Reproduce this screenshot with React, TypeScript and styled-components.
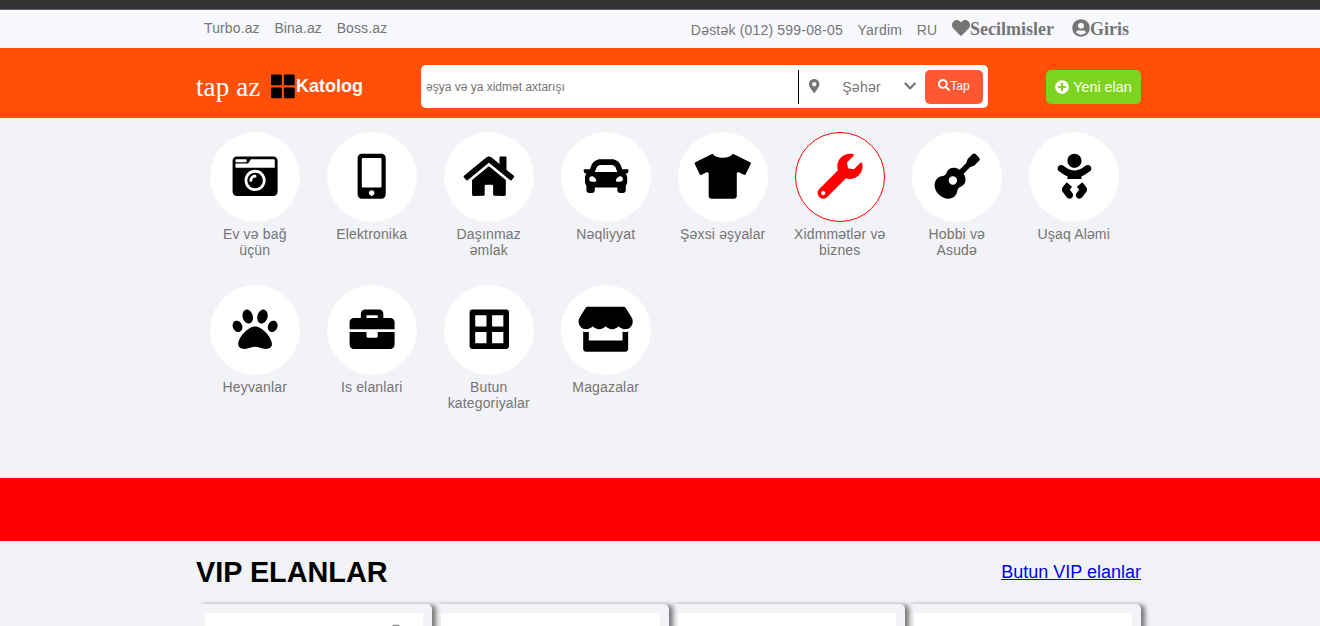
import React from 'react';
import styled, { createGlobalStyle } from 'styled-components';
import {
  FaCameraRetro, FaMobileAlt, FaHome, FaCar, FaTshirt, FaWrench, FaGuitar, FaBaby, FaPaw,
  FaBriefcase, FaBorderAll, FaStore, FaHeart, FaUserCircle, FaMapMarkerAlt, FaChevronDown,
  FaSearch, FaPlusCircle,
} from 'react-icons/fa';
import type { IconType } from 'react-icons';

const GlobalStyle = createGlobalStyle`
  * { box-sizing: border-box; }
  body {
    margin: 0;
    background: #f1f3f7;
    font-family: "Liberation Sans", Arial, sans-serif;
    overflow: hidden;
  }
  svg { display: block; flex: none; }
`;

const Page = styled.div`
  height: 626px;
  overflow: hidden;
`;

const Strip = styled.div`
  height: 10px;
  background: #333;
  border-bottom: 1px solid #666;
`;

const TopBar = styled.div`
  height: 38px;
  background: #f8f9fd;
  color: #757575;
  display: flex;
  justify-content: space-between;
  padding: 0 191px 0 204px;
`;

const TopLinks = styled.nav`
  display: flex;
  gap: 14.7px;
  font-size: 14px;
  line-height: 16px;
  padding-top: 10px;
  letter-spacing: 0.12px;
`;

const SupportLinks = styled.nav`
  display: flex;
  gap: 14.7px;
  font-size: 14px;
  line-height: 16px;
  padding-top: 12px;
  white-space: nowrap;
  letter-spacing: 0.19px;
`;

const IconLink = styled.a<{ $before?: number }>`
  display: flex;
  font: bold 18px/20px "Liberation Serif", "Times New Roman", serif;
  letter-spacing: 0;
  height: 20px;
  margin-top: -3px;
  margin-left: ${(p) => p.$before ?? 0}px;
`;

const Header = styled.header`
  height: 70px;
  background: #ff4f08;
  color: #fff;
  display: flex;
  align-items: center;
  padding: 0 179px 0 196px;
`;

const Logo = styled.a`
  font: 27px/30px "Liberation Serif", "Times New Roman", serif;
  letter-spacing: 0.1px;
  width: 74.5px;
  padding-top: 7px;
`;

const Catalog = styled.a`
  display: flex;
  align-items: center;
  width: 150.5px;
  font-weight: bold;
  font-size: 18px;
  line-height: 20px;
  padding-top: 6px;

  span { padding: 0 0 1px 0.5px; }
`;

const SearchBox = styled.form`
  width: 567px;
  height: 43px;
  margin-top: 7px;
  background: #fff;
  border-radius: 5px;
  display: flex;
  align-items: center;
  color: #757575;
  padding: 0 5px;
`;

const Query = styled.span`
  width: 372px;
  font-size: 12px;
  line-height: 14px;
`;

const City = styled.div`
  width: 127px;
  height: 34px;
  border-left: 1px solid #000;
  display: flex;
  align-items: center;
  padding: 0 9px 0 10px;
  font-size: 14px;

  span { margin: 0 auto; letter-spacing: 0.3px; }
  svg { height: 14px; margin-top: -2px; overflow: visible; }
  svg:first-child { width: 10.5px; }
  svg:last-child { width: 12.25px; }
`;

const SearchButton = styled.button`
  width: 58px;
  height: 34px;
  border: 0;
  border-radius: 5px;
  background: #ff5833;
  color: #fff;
  font: 12px "Liberation Sans", Arial, sans-serif;
  display: flex;
  justify-content: center;
  padding: 9px 0 0;
`;

const NewAd = styled.a`
  margin-left: auto;
  margin-top: 7px;
  width: 95px;
  height: 34px;
  border-radius: 5px;
  background: #7ed321;
  display: flex;
  align-items: center;
  justify-content: center;
  gap: 4px;
  font-size: 14.3px;
  white-space: nowrap;
`;

const Categories = styled.section`
  height: 360px;
  padding: 14px 179px 0 196px;
  display: grid;
  grid-template-columns: repeat(8, 117px);
  grid-auto-rows: 153px;
`;

const Category = styled.a`
  display: flex;
  flex-direction: column;
  align-items: center;
  color: #757575;
  font-size: 14px;
  line-height: 16px;
  text-align: center;
  letter-spacing: 0.16px;

  span { width: 97px; margin-top: 4px; padding-left: 0.5px; }
`;

const Circle = styled.div<{ $active?: boolean; $iconWidth: number }>`
  width: 90px;
  height: 90px;
  border-radius: 50%;
  background: #fff;
  color: ${(p) => (p.$active ? 'red' : '#000')};
  border: 1px solid ${(p) => (p.$active ? 'red' : '#fff')};
  display: flex;
  align-items: center;
  justify-content: center;
  padding-bottom: 2px;

  svg {
    width: ${(p) => p.$iconWidth}px;
    height: 45px;
    overflow: visible;
    transform: translate(0.6px, -0.3px);
  }
`;

const Banner = styled.div`
  height: 63px;
  background: red;
`;

const VipHead = styled.div`
  display: flex;
  justify-content: space-between;
  align-items: center;
  height: 62px;
  padding: 0 179px 0 196px;

  h2 { margin: 0; font-size: 28.8px; line-height: 34px; }
  a { font-size: 18px; color: #0000ee; text-decoration: underline; }
`;

const Cards = styled.div`
  display: grid;
  grid-template-columns: repeat(4, 236.25px);
  padding: 1px 179px 0 196px;
`;

const Card = styled.article`
  height: 280px;
  border-radius: 5px;
  box-shadow: 5px 0 5px -1px #777;
  padding: 9px 9px 0;
`;

const Photo = styled.div`
  height: 160px;
  background: #fff;
  padding: 11px 0 0 183px;
`;

const items: { icon: IconType; width: number; label: string; active?: boolean }[] = [
  { icon: FaCameraRetro, width: 45, label: 'Ev və bağ üçün' },
  { icon: FaMobileAlt, width: 28.125, label: 'Elektronika' },
  { icon: FaHome, width: 50.625, label: 'Daşınmaz əmlak' },
  { icon: FaCar, width: 45, label: 'Nəqliyyat' },
  { icon: FaTshirt, width: 56.25, label: 'Şəxsi əşyalar' },
  { icon: FaWrench, width: 45, label: 'Xidmmətlər və biznes', active: true },
  { icon: FaGuitar, width: 45, label: 'Hobbi və Asudə' },
  { icon: FaBaby, width: 33.75, label: 'Uşaq Aləmi' },
  { icon: FaPaw, width: 45, label: 'Heyvanlar' },
  { icon: FaBriefcase, width: 45, label: 'Is elanlari' },
  { icon: FaBorderAll, width: 39.375, label: 'Butun kategoriyalar' },
  { icon: FaStore, width: 54.14, label: 'Magazalar' },
];

const GridIcon = () => (
  <svg width="25" height="25" viewBox="0 0 25 25">
    <rect x="0" y="0.5" width="10.8" height="10.8" rx="1.3" />
    <rect x="12.9" y="0.5" width="10.8" height="10.8" rx="1.3" />
    <rect x="0" y="13.4" width="10.8" height="10.8" rx="1.3" />
    <rect x="12.9" y="13.4" width="10.8" height="10.8" rx="1.3" />
  </svg>
);

export default function App() {
  return (
    <Page>
      <GlobalStyle />
      <Strip />
      <TopBar>
        <TopLinks>
          <a>Turbo.az</a>
          <a>Bina.az</a>
          <a>Boss.az</a>
        </TopLinks>
        <SupportLinks>
          <a>Dəstək (012) 599-08-05</a>
          <a>Yardim</a>
          <a>RU</a>
          <IconLink><FaHeart size={18} />Secilmisler</IconLink>
          <IconLink $before={3.3}><FaUserCircle size={18} />Giris</IconLink>
        </SupportLinks>
      </TopBar>
      <Header>
        <Logo>tap az</Logo>
        <Catalog><GridIcon /><span>Katolog</span></Catalog>
        <SearchBox>
          <Query>əşya və ya xidmət axtarışı</Query>
          <City>
            <FaMapMarkerAlt />
            <span>Şəhər</span>
            <FaChevronDown />
          </City>
          <SearchButton type="button"><FaSearch size={12} />Tap</SearchButton>
        </SearchBox>
        <NewAd><FaPlusCircle size={14} />Yeni elan</NewAd>
      </Header>
      <Categories>
        {items.map(({ icon: Icon, width, label, active }) => (
          <Category key={label}>
            <Circle $active={active} $iconWidth={width}><Icon /></Circle>
            <span>{label}</span>
          </Category>
        ))}
      </Categories>
      <Banner />
      <VipHead>
        <h2>VIP ELANLAR</h2>
        <a>Butun VIP elanlar</a>
      </VipHead>
      <Cards>
        {[0, 1, 2, 3].map((n) => (
          <Card key={n}>
            <Photo>
              {n === 0 && (
                <svg width="18" height="14" viewBox="0 0 18 14">
                  <ellipse cx="8" cy="7" rx="7" ry="6.4" fill="#999" />
                </svg>
              )}
            </Photo>
          </Card>
        ))}
      </Cards>
    </Page>
  );
}
